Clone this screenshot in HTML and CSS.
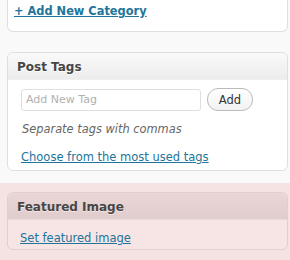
FILE: index.html
```html
<!DOCTYPE html>
<html>
<head>
<meta charset="utf-8">
<link rel="stylesheet" href="styles.css">
</head>
<body>
<div class="column">
  <div class="box box-top">
    <a class="add-cat" href="#">+ Add New Category</a>
  </div>
  <div class="box tags">
    <div class="box-head"><h3>Post Tags</h3></div>
    <div class="box-body">
      <div class="tag-row">
        <input class="tag-input" type="text" placeholder="Add New Tag">
        <button class="btn">Add</button>
      </div>
      <p class="howto">Separate tags with commas</p>
      <a class="link" href="#">Choose from the most used tags</a>
    </div>
  </div>
</div>
<div class="drop-zone">
  <div class="box featured">
    <div class="box-head"><h3>Featured Image</h3></div>
    <div class="box-body">
      <a class="link" href="#">Set featured image</a>
    </div>
  </div>
</div>
</body>
</html>
```

FILE: styles.css
```css
html, body {
  margin: 0;
  padding: 0;
  height: 100%;
}
body {
  background: #f9f9f9;
  font-family: "DejaVu Sans", Verdana, sans-serif;
  color: #333;
  overflow: hidden;
  display: flex;
  flex-direction: column;
}
.column {
  padding: 0 2px 0 7px;
}
.box {
  border: 1px solid #dfdfdf;
  border-radius: 6px;
  background: #fff;
}
.box-top {
  border-top: none;
  border-radius: 0 0 6px 6px;
  height: 32px;
  padding: 0 0 0 6px;
  box-sizing: border-box;
}
.add-cat {
  display: block;
  padding-top: 4px;
  font-size: 11.4px;
  font-weight: bold;
  color: #21759b;
  line-height: 14px;
}
.tags {
  margin-top: 20px;
  height: 119px;
  box-sizing: border-box;
}
.box-head {
  height: 27px;
  border-radius: 6px 6px 0 0;
  background: linear-gradient(to bottom, #f9f9f9, #ececec);
  border-bottom: 1px solid #f0f0f0;
  box-sizing: border-box;
}
.box-head h3 {
  margin: 0;
  padding: 7px 0 0 9px;
  font-size: 12px;
  line-height: 15px;
  font-weight: bold;
  color: #464646;
  text-shadow: 0 1px 0 #fff;
}
.box-body {
  padding: 8px 0 0 13px;
}
.tag-row {
  display: flex;
  align-items: center;
  gap: 6px;
}
.tag-input {
  width: 180px;
  height: 22px;
  box-sizing: border-box;
  border: 1px solid #dfdfdf;
  border-radius: 3px;
  padding: 0 4px;
  margin: 0;
  font-family: "DejaVu Sans", Verdana, sans-serif;
  font-size: 11px;
  color: #333;
  background: #fff;
}
.tag-input::placeholder {
  color: #b0b0b0;
}
.btn {
  width: 46px;
  height: 23px;
  box-sizing: border-box;
  border: 1px solid #bbb;
  border-radius: 11px;
  background: linear-gradient(to bottom, #fff, #f2f2f2);
  font-family: "DejaVu Sans", Verdana, sans-serif;
  font-size: 11.5px;
  color: #333;
  padding: 0;
  margin: 0;
}
.howto {
  margin: 11px 0 0 1px;
  font-size: 11.4px;
  font-style: italic;
  color: #666;
  line-height: 14px;
}
.link {
  display: inline-block;
  margin-top: 14px;
  font-size: 11.5px;
  line-height: 14px;
  color: #21759b;
}
.drop-zone {
  margin-top: 12px;
  background: #f5e2e2;
  padding: 9px 2px 0 7px;
  flex: 1;
}
.featured {
  background: #f7e4e4;
  border-color: #dfcfcf;
  height: 58px;
  box-sizing: border-box;
}
.featured .box-head {
  background: linear-gradient(to bottom, #ead6d6, #e0cccc);
  border-bottom-color: #ecdada;
}
.featured .box-head h3 {
  text-shadow: 0 1px 0 #f6e6e6;
}
.featured .box-body {
  padding-top: 7px;
  padding-left: 12px;
}
.featured .link {
  margin-top: 0;
}
```
